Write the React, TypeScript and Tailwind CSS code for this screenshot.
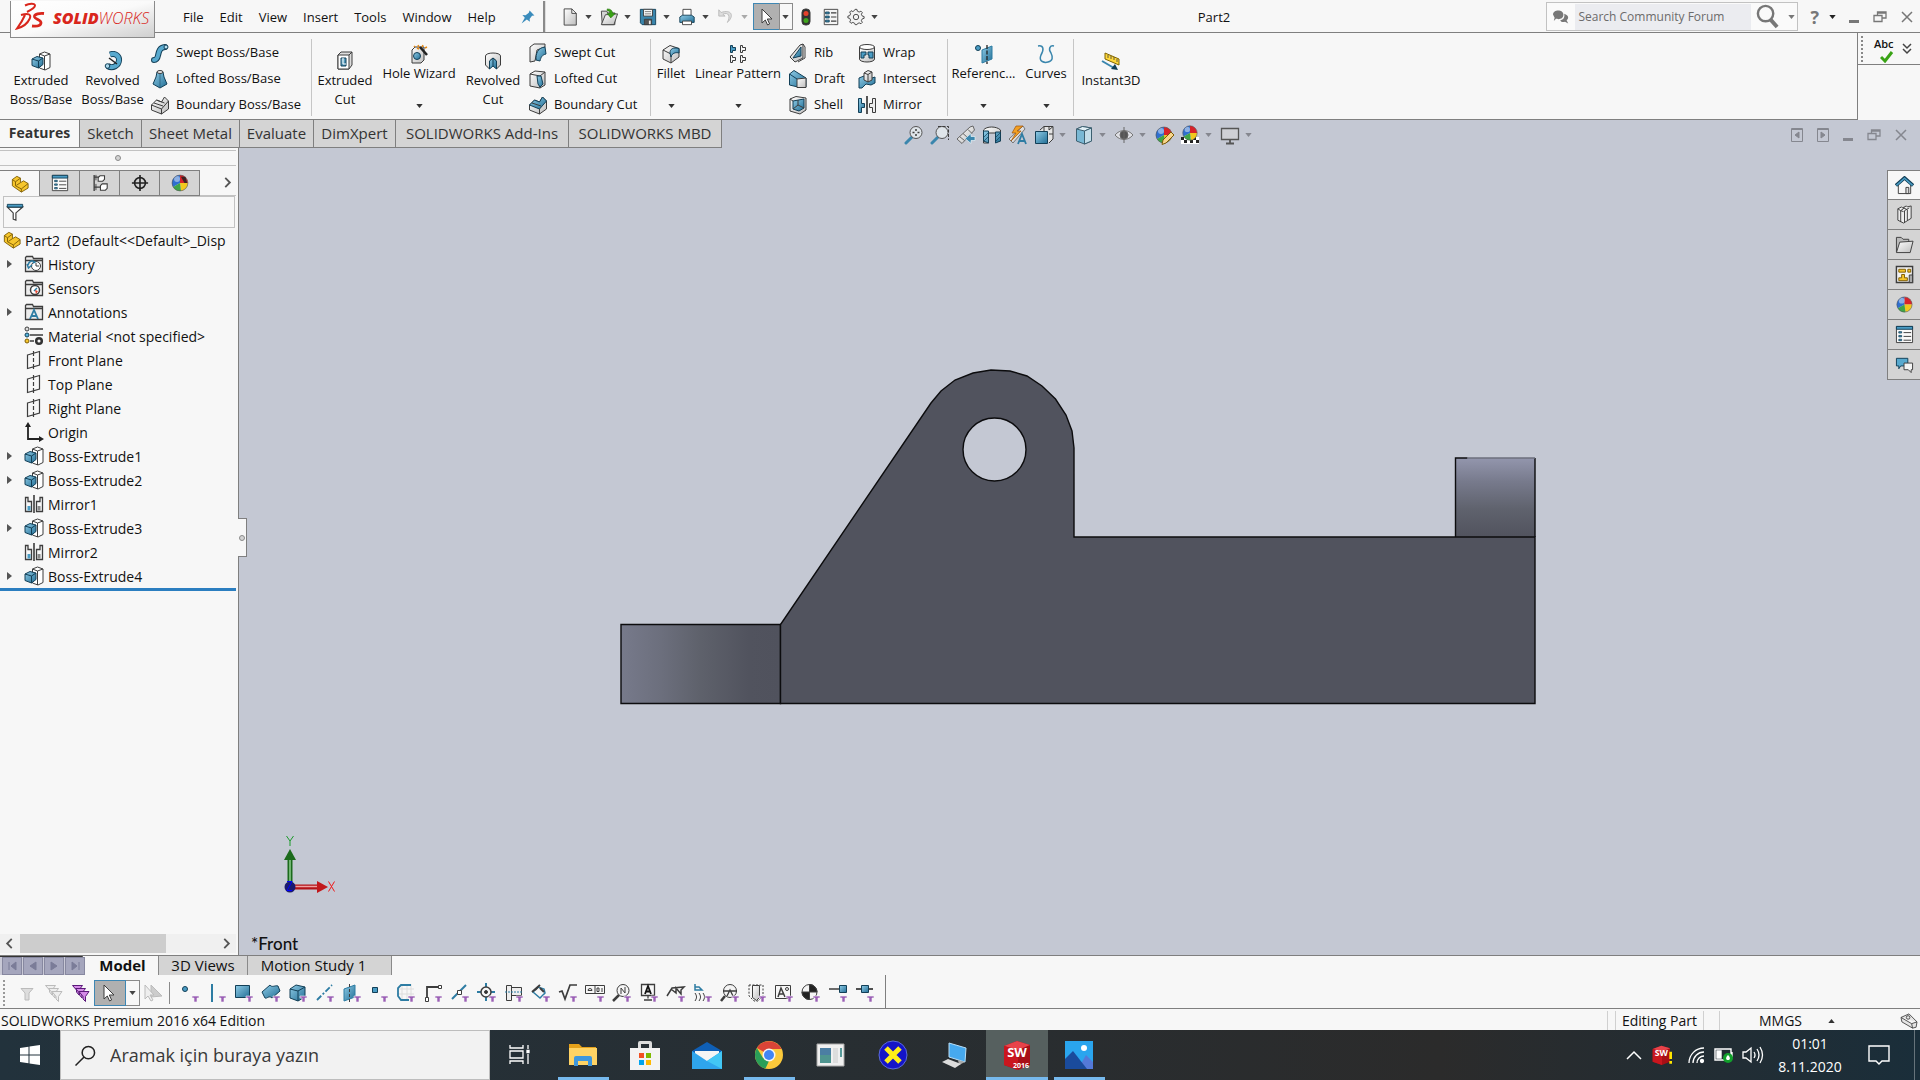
import { useState } from "react";
import type { ReactNode } from "react";

const Svg = ({ children, className = "w-5 h-5" }: { children: ReactNode; className?: string }) => (
  <svg viewBox="0 0 20 20" className={`${className} shrink-0`} fill="none" stroke="#3d3d3d" strokeWidth="1" aria-hidden="true">
    <defs>
      <linearGradient id="steel" x1="0" y1="0" x2="1" y2="1">
        <stop offset="0" stopColor="#8fcbe6" />
        <stop offset="1" stopColor="#226f96" />
      </linearGradient>
      <linearGradient id="plate" x1="0" y1="0" x2="1" y2="1">
        <stop offset="0" stopColor="#ffffff" />
        <stop offset="1" stopColor="#bdbdbd" />
      </linearGradient>
    </defs>
    {children}
  </svg>
);

const ball = (
  <g stroke="none">
    <path d="M10 10V2a8 8 0 0 0-7 12z" fill="#2f6fd0" />
    <path d="M10 10V2a8 8 0 0 1 8 8z" fill="#d8232a" />
    <path d="M10 10h8a8 8 0 0 1-7 8z" fill="#f2c81e" />
    <path d="M10 10 3 14a8 8 0 0 0 8 4z" fill="#3fa548" />
    <circle cx="7" cy="6" r="3" fill="#fff" opacity=".45" />
    <circle cx="10" cy="10" r="8" stroke="#555" strokeWidth=".6" />
  </g>
);

const lens = (
  <>
    <path d="m2 18 6-6" stroke="#3a86ad" strokeWidth="3" strokeLinecap="round" />
    <circle cx="12" cy="7.500" r="6" fill="#dfe5ea" stroke="#555" />
  </>
);

const list = (
  <>
    <path d="M2.500 1.500h15v17h-15z" fill="#f4f4f4" />
    <path d="M4 4.500h4v2H4zM4 9h4v2H4zM4 13.500h4v2H4z" fill="#4a9cc4" stroke="#123f57" />
    <path d="M10 5.500h6M10 10h6M10 14.500h6" strokeWidth="1.300" />
  </>
);

const sheet = (
  <>
    <path d="M1.500 1.500h17v17h-17z" fill="#fafafa" />
    <path d="M1.500 1.500h17v3h-17z" fill="#4a9cc4" stroke="#123f57" />
    <path d="M4 7h3v1.500H4zM4 11h3v1.500H4zM4 15h3v1.500H4z" fill="#4a9cc4" stroke="#123f57" strokeWidth=".8" />
    <path d="M9 8h8M9 12h8M9 16h8" />
  </>
);

const mirror = (
  <>
    <path d="M1.500 3.500h3v5h3v4h-3v5h-3z" fill="url(#steel)" stroke="#123f57" />
    <path d="M18.500 3.500h-3v5h-3v4h3v5h3z" fill="#eee" />
    <path d="M10 1v18" stroke="#111" strokeWidth="1.400" />
  </>
);

const boss = (
  <>
    <path d="m8.500 3 5-2 5.500 2v13.500L14 19l-5.500-2z" fill="#fff" />
    <path d="M13.500 5v14M8.500 3l5 2L19 3" />
    <path d="m1 8 5-2.500 6 1.500v6.500L7.500 17 1 14.500z" fill="url(#steel)" stroke="#123f57" />
    <path d="m1 8 6.500 2L12 7m-4.500 3v7" stroke="#123f57" />
  </>
);

const plane = <path d="m3.500 5 12-3.500V15l-12 3.500zM9.500 1v5m0 2v4m0 2v5" strokeWidth="1.200" />;

const folder = <path d="M1.500 17.500V3.500l1-1h6l1 2h9v13zM1.500 6.500h17" fill="#ececec" strokeWidth="1.300" />;

const cursor = <path d="M6 2v14l3.300-3 2.300 5 2-1-2.300-5H16z" fill="#fff" />;

const part = (
  <>
    <path d="m1.500 5 5-3.500 4 2v5l3.500-2 5 3v5l-7.500 4.500-10-7z" fill="#f6c62c" stroke="#7d5c05" />
    <path d="m1.500 5 3.500 2.500 5.500-4M5 7.500V12l6.500 3.500L19 9.500M11.500 15.500V19M10.500 8.500l-4.500 3" stroke="#7d5c05" />
  </>
);

const funnels = (fill: string, line: string) => (
  <g fill={fill} stroke={line}>
    <path d="M1.500 2.500h10L8 7v5L5.500 9V7z" />
    <path d="M4.500 5.500h10L11 10v5l-2.500-3v-2z" />
    <path d="M8 8.500h10l-3.500 5v5L12 16v-2.500z" />
  </g>
);

const icons: Record<string, ReactNode> = {
  boss,
  mirror,
  plane,
  list,
  sheet,
  part,
  ball,
  revolve: <><path d="M7 3.500c6-2 9.500 2 9 6-.5 5-6 8.500-11.500 5.500" stroke="#123f57" strokeWidth="6" /><path d="M7 3.500c6-2 9.500 2 9 6-.5 5-6 8.500-11.500 5.500" stroke="#58a9ce" strokeWidth="4.200" /><circle cx="4.500" cy="15" r="2.300" fill="#a9d8ec" stroke="#123f57" /><path d="m6 7 8 6" strokeWidth="1.500" stroke="#222" /></>,
  sweep: <><path d="M4 17c7 0 1-12 11-13" stroke="#123f57" strokeWidth="6" strokeLinecap="round" /><path d="M4 17c7 0 1-12 11-13" stroke="#58a9ce" strokeWidth="4" strokeLinecap="round" /><circle cx="16" cy="4" r="2" fill="#b7e0f1" stroke="#123f57" /></>,
  loft: <><path d="M7 3h6l1 5 3 7-7 4-7-4 3-7z" fill="url(#steel)" stroke="#123f57" /><ellipse cx="10" cy="3" rx="3" ry="1.500" fill="#e9e9e9" /><path d="M10 5v13" stroke="#123f57" opacity=".5" /></>,
  boundary: <><path d="m1.500 10 5-5 5 2 3-5 4 4v8l-7 5-10-4z" fill="url(#plate)" /><path d="m1.500 10 10 4 7-8M11.500 14v5M4 8l9 3M6.500 5l8 3" /></>,
  boundaryCut: <><path d="m1.500 10 5-5 5 2 3-5 4 4v8l-7 5-10-4z" fill="url(#plate)" /><path d="m1.500 10 5-5 5 2 3-5 4 4-7 8z" fill="url(#steel)" stroke="#123f57" /><path d="M11.500 14v5M4 8l9 3" /></>,
  cut: <><path d="m3 4 3-3h11v13l-3 4H3z" fill="#ddd" /><path d="M3 4h11v14H3z" fill="#fff" /><path d="m14 4 3-3" /><path d="M6 7h5v8H6z" fill="url(#steel)" stroke="#123f57" /><path d="M8 7v6h3" stroke="#fff" /></>,
  hole: <><path d="m3 6 3-3h9v13l-3 3H3z" fill="url(#plate)" /><circle cx="8" cy="12" r="3.500" fill="url(#steel)" stroke="#123f57" /><path d="m11 3 7 8" stroke="#222" strokeWidth="2.500" /><path d="m5 2 1 1M9 1l1 2m4-2-1 2m5 0-2 1M8 4l2 1" stroke="#e88a12" strokeWidth="1.500" /></>,
  revCut: <><path d="M2.500 5c0-4 15-4 15 0v9l-4 4v-8l-3.500-3L6.500 10v8l-4-4z" fill="url(#plate)" /><path d="M6.500 10 10 7l3.500 3v8L10 15l-3.500 3z" fill="url(#steel)" stroke="#123f57" /><path d="M10 7v8" stroke="#123f57" /></>,
  sweepCut: <><path d="m2 4 4-3h11v3l-8 3-2 11-5 1z" fill="url(#plate)" /><path d="M17 4C9 5 8 11 8 17l4 1c1-4 2-6 6-7z" fill="url(#steel)" stroke="#123f57" /></>,
  loftCut: <><path d="m2 5 5-3 10 1v13l-5 3-10-2z" fill="url(#plate)" /><path d="m2 5 10 2 5-4m-5 4v12" /><path d="M9 7h4l2 8-3 3-2-3z" fill="url(#steel)" stroke="#123f57" /></>,
  fillet: <><path d="m2 6 7-4.500 9 3V13l-8 6-8-4z" fill="url(#plate)" /><path d="m2 6 8 4v9" /><path d="M9 9c0-4 3-6 9-4.500V9c-3-1-7 0-8 4z" fill="url(#steel)" stroke="#123f57" /></>,
  linear: <><path d="M2.500 1.500h2v2h3v3h-3v2h-2z" fill="#4a9cc4" stroke="#123f57" /><path d="M12.500 1.500h2v2h3v3h-3v2h-2zM2.500 11.500h2v2h3v3h-3v2h-2zM12.500 11.500h2v2h3v3h-3v2h-2z" /></>,
  rib: <><path d="m2 14 10-12 3-1v14l-8 4z" fill="url(#plate)" /><path d="m5 15 8-11v9z" fill="url(#steel)" stroke="#123f57" /><path d="m15 1 2 3v11l-7 4" /></>,
  draft: <><path d="M1.500 5 6 1.500 18 9v9l-6 .5L1.500 16z" fill="url(#steel)" stroke="#123f57" /><path d="m9 10 9-1v9.500H9z" fill="url(#plate)" /><path d="m1.500 5 7.500 5" stroke="#123f57" /></>,
  shell: <><path d="m2 4 6-2.500L18 3v12l-6 4-10-3z" fill="url(#plate)" /><path d="m5 6 11-2v9l-5 3-6-2z" fill="url(#steel)" stroke="#123f57" /><path d="m5 14 5-4 6 3m-6-3V5M2 4l3 2" /></>,
  wrap: <><path d="M2.500 4v12c0 4 15 4 15 0V4" fill="url(#plate)" /><ellipse cx="10" cy="4" rx="7.500" ry="2.500" fill="#fff" /><path d="M4 9h5v3H7v3H4zM11 9h5v6h-4v-3h-1z" fill="#4a9cc4" stroke="#123f57" /></>,
  intersect: <><path d="m2 9 5-2 8 2 3-1v6l-4 2-5-1-4 4H2z" fill="url(#steel)" stroke="#123f57" /><path d="m7 4 4-2.500 4 1.500v8l-4 2-4-2z" fill="url(#plate)" /><path d="m7 4 4 1.500 4-2.500M11 5.500V13" /></>,
  refgeo: <><circle cx="4" cy="4" r="2.500" fill="#4a9cc4" stroke="#123f57" /><path d="m8 6 10-4v13L8 19z" fill="url(#steel)" stroke="#2d7ca3" /><path d="M13 1v19" stroke="#222" strokeWidth="1.300" strokeDasharray="4 1.500" /></>,
  curves: <path d="M2 2c6-1 6 4 3 9-3 7 4 8 7 7 5-1 5-5 3-9-3-4-1-8 3-7" stroke="#3a86ad" strokeWidth="1.500" />,
  instant: <><path d="m4 2 14 6v6L4 8z" fill="#ffd83a" stroke="#806500" /><path d="M7 4v3m3-2v3m3-2v3m3-1v3" strokeWidth=".8" /><path d="m1 10 12 7" stroke="#3a86ad" strokeWidth="2" /><path d="m17 19-7-1 4-5z" fill="#123f57" stroke="none" /></>,
  pin: <path d="m12 2 6 6-3 .5-3 4 .5 3.500-4-3L2 18l4-7-3-3.500 4 .2 4-3z" fill="#3a8cbc" stroke="none" />,
  fresh: <path d="M3.500 1h8.500l5 5v13H3.500zM12 1v5h5" fill="url(#plate)" />,
  open: <><path d="M1.500 3.500h6l1 2h8v13h-14z" fill="#d5d5d5" /><path d="m6 7.500 13.500-1-4 12h-14z" fill="url(#plate)" /><path d="M8 1c4 0 6 2 6 5h3l-5 5-4-5h3c0-2-1-3-3-3z" fill="#39a315" stroke="#1e6c06" strokeWidth=".6" /></>,
  save: <><path d="M1.500 1.500h17v17h-15l-2-2z" fill="#3a86ad" stroke="#123f57" /><path d="M5 1.500h10V9H5z" fill="#f7f7f7" /><path d="M6.500 4h7m-7 2.500h7" stroke="#777" /><path d="M6 12.500h8v6H6z" fill="#555" /><path d="M11 14h2v4h-2z" fill="#eee" stroke="none" /></>,
  print: <><path d="M5.500 1.500h9v8h-9z" fill="#fff" /><path d="m2 10 3-2h10l3 2v6H2z" fill="url(#steel)" stroke="#123f57" /><path d="M5 14.500h10v4H5z" fill="#fff" /></>,
  undo: <path d="M2 2v7h7L6.500 7c6-3 9 2 5 9 8-7 5-15-7-11z" fill="#ddd" stroke="#b9b9b9" />,
  cursor,
  light: <><rect x="5.500" y="1" width="9" height="18" rx="4" fill="#333" /><circle cx="10" cy="6" r="2.800" fill="#e5412c" stroke="none" /><circle cx="10" cy="14" r="2.800" fill="#3fa51d" stroke="none" /></>,
  gear: <><path d="m8.500 2.500.5-1h2l.5 2 2 1 2-1 1.500 1.500-1 2 1 2 2 .5v2l-2 .5-1 2 1 2-1.500 1.500-2-1-2 1-.5 1H9l-.5-1.500-2-1-2 1L3 15.500l1-2-1-2-2-.5V9l2-.5 1-2-1-2L4.500 3l2 1z" fill="#f2f2f2" /><circle cx="10" cy="10" r="3" /></>,
  zoomFit: <>{lens}<path d="M12 4v2m0 3v2M8.500 7.500h2m3 0h2" strokeWidth="1.500" /></>,
  zoomArea: <>{lens}<path d="M8 1.500h10.500V15" strokeDasharray="3 1.500" /></>,
  prev: <><path d="m1 14 5 4.500L18.500 5l-1.500-4-3 1z" fill="url(#plate)" stroke="#666" /><path d="m3.500 11.500 5 4m3.500-11 4 4M7 8.500l4.500 4" stroke="#666" /><path d="M19 11.500v4h-4v3l-6-5 6-5v3z" fill="#3a86ad" stroke="#e8f3f8" strokeWidth=".7" /></>,
  section: <><path d="M1.500 5c3-4 13-4 17 0v11h-5V8h-7v10h-5z" fill="url(#plate)" /><path d="M1.500 6h5v12l-5-2zM13.500 7h5v9l-5 2z" fill="url(#steel)" stroke="#123f57" /><path d="m2 12 4-4m-4 8 4-4m8 0 4-4m-4 8 4-4" stroke="#123f57" strokeWidth=".7" /></>,
  annoView: <><path d="m1 14 4 4L17 4l-2-3z" fill="url(#plate)" stroke="#777" /><path d="m8 1-4 7h4l-5 8 10-10H9l6-5z" fill="#f2a024" stroke="#a0540b" strokeWidth=".7" /><path d="m10 19 4-10 4 10m-7-3h6" stroke="#2d7ca3" strokeWidth="1.800" /></>,
  orient: <><path d="m6 5 4-3.500h9V14l-4 4" fill="#e4e4e4" /><path d="M10 1.500V10m5-8.500V5m4 4h-4m0-4 4-3.500" /><path d="M1.500 6.500h12v12h-12z" fill="url(#steel)" stroke="#123f57" /></>,
  style: <><path d="m2.500 4 6-2.500 9 1.500v13l-7 3-8-3z" fill="#79b8d4" stroke="#3c5f70" /><path d="m2.500 4 8 2 7-3-9-1.500z" fill="#e0eff6" stroke="#3c5f70" /><path d="M10.500 6v13l7-3V3z" fill="#c4dde8" stroke="#3c5f70" /></>,
  eye: <><path d="M1 10c5-6 13-6 18 0-5 6-13 6-18 0z" fill="#dfe0e5" stroke="#777" /><circle cx="10" cy="10" r="4" fill="#555" stroke="#666" /><path d="M10 2v16" stroke="#666" /></>,
  paint: <>{ball}<path d="m9 15 8-8 3 3-8 8-4 1.500z" fill="#f7d58d" stroke="#7d5c05" /></>,
  scene: <><path d="M1 12h18v7H1z" fill="#fff" stroke="none" /><path d="M1 12h3v3H1zM7 12h3v3H7zM13 12h3v3h-3zM4 15h3v3H4zM10 15h3v3h-3zM16 15h3v3h-3z" fill="#222" stroke="none" /><g transform="translate(1 -1) scale(.9)">{ball}</g></>,
  monitor: <><path d="M1.500 3.500h17v11h-17z" fill="#cfd0d5" strokeWidth="1.300" stroke="#555" /><path d="M10 15v3M6 18.500h8" strokeWidth="1.800" stroke="#555" /></>,
  config: <><path d="M3.500 1v18M3.500 3.500h6m-6 11h8" strokeWidth="1.500" /><path d="m8 4 2-2h5v4l-2 2H8zM10.500 13l2-2h5.500v5l-2 2h-5.500z" fill="#fff" strokeWidth="1.200" /><path d="M5.500 1v6m0 4v7" /></>,
  target: <><circle cx="10" cy="10" r="6" strokeWidth="1.800" stroke="#222" /><path d="M10 1v18M1 10h18" strokeWidth="1.800" stroke="#222" /></>,
  display: <><g transform="translate(-1 -1) scale(1.100)">{ball}</g><path d="m11 3 5 0 2 7-3 0z" fill="#222" stroke="none" opacity=".85" /></>,
  filter: <><path d="M1.500 4.500 8 11v7l3 1v-8l7.500-6.500z" fill="#fff" strokeWidth="1.300" /><path d="M1.500 1.500h17v3h-17z" fill="#4a9cc4" stroke="#123f57" /></>,
  history: <>{folder}<circle cx="12" cy="12" r="4.500" fill="#fff" /><path d="M12 9v3h3" /><path d="M4 11c1-4 4-5 7-3l-2 1M3 10l1.500 4L8 11" stroke="#2d7ca3" strokeWidth="1.500" /></>,
  sensors: <>{folder}<circle cx="11" cy="12" r="4.500" fill="#fff" strokeWidth="1.500" /><path d="m10 13 3-3" stroke="#2d7ca3" strokeWidth="1.500" /><path d="m11 12 3 1-2 3z" fill="#e5412c" stroke="none" /></>,
  annotations: <>{folder}<path d="m6 17 4-9 4 9m-6-3h5" stroke="#2d7ca3" strokeWidth="1.800" /></>,
  material: <><path d="M6 3h13M6 9h13M6 15h4" strokeWidth="1.700" /><circle cx="3" cy="3" r="2" fill="#ddd" /><circle cx="3" cy="9" r="2" fill="#58b4dc" stroke="#123f57" /><circle cx="3" cy="15" r="2" fill="#f6c62c" stroke="#7d5c05" /><circle cx="15" cy="15" r="2.800" stroke="#333" strokeWidth="2.500" /></>,
  origin: <><path d="M4 4v13h12" strokeWidth="1.800" stroke="#222" /><path d="m4 0 3 5H1zM20 17l-5-3v6z" fill="#222" stroke="none" /></>,
  treeMirror: <><path d="M1.500 3.500h2.500v4h3.500v10h-6zM18.500 3.500h-2.500v4h-3.500v10h6z" strokeWidth="1.300" fill="#f7f7f7" /><path d="M3.500 12h3v4.500h-3z" fill="#4a9cc4" stroke="none" /><path d="M13.500 12h3v4.500h-3z" fill="#888" stroke="none" /><path d="M10 1v18" stroke="#111" strokeWidth="1.300" /></>,
  home: <><path d="M3.500 9v9.500h13V9L10 3z" fill="#f7f7f7" /><path d="M11.500 12h3v6.500h-3z" fill="#ddd" /><path d="m1 10 9-8 9 8" stroke="#123f57" strokeWidth="3.600" /><path d="m1.500 9.800 8.500-7.500 8.500 7.500" stroke="#4a9cc4" strokeWidth="1.600" /></>,
  library: <path d="m3 4 4-2 1 1 4-2 1 1 4-1v13l-8 5-6-3zm0 0 3 2v12M6 6l4-3m0 16V6l5-3M6 6l3 1m0-4 4 2v11" fill="#eee" />,
  openFolder: <><path d="M1.500 18V2.500h5l2 2h6V8" fill="#bbb" /><path d="m5 7.500 14-1-3 12H1.500z" fill="url(#plate)" /></>,
  palette: <><path d="M1.500 1.500h17v17h-17z" fill="#f2f2f2" strokeWidth="1.500" /><path d="M4 4.500h7v3H4zM13.500 4.500h3v3h-3zM7 10h3v3.500h3v3H4v-3h3z" fill="#f6c62c" stroke="#7d5c05" /><path d="M15 10.500h3.500v8H15z" fill="#aaa" /></>,
  chat: <><path d="M1.500 3.500h12v8H6l-2 3v-3H1.500z" fill="#58a9ce" stroke="#123f57" /><path d="M9.500 8.500h9v7H17v3l-3-3H9.500z" fill="#f4f4f4" /></>,
};

const Icon = ({ name, className }: { name: string; className?: string }) => <Svg className={className}>{icons[name]}</Svg>;

const Arrow = ({ className = "fill-[#444]" }: { className?: string }) => (
  <svg viewBox="0 0 8 5" className={`w-[7px] h-[4px] shrink-0 ${className}`} aria-hidden="true"><path d="M0 0h8L4 5z" /></svg>
);

const menus = ["File", "Edit", "View", "Insert", "Tools", "Window", "Help"];

const Logo = () => (
  <div className="relative z-10 ml-2.5 flex h-[37px] w-[145px] shrink-0 items-center self-start border border-t-0 border-[#8a8a8a] bg-linear-to-br from-white via-[#fafafa] to-[#cfcfcf] pb-1 pl-1 text-[#d9261c]">
    <svg viewBox="0 0 30 30" className="h-[30px] w-[30px] shrink-0" fill="none" stroke="#d9261c" strokeWidth="2" aria-hidden="true">
      <path d="M10 3.500c4-2 10-2.500 10 0s-4 4.500-8 6.500" />
      <path d="M6 13c7-2 11-1 8.500 4-2 4.500-7 8-12.500 9.500 3-4 6-9 8-13.500" />
      <path d="M29 11.500c-4-.5-10 .5-9.500 3.500.5 2 7 3 6.500 6-.5 3-5 3.500-9 3" strokeWidth="2.800" />
    </svg>
    <span className="mt-[2px] ml-2 text-base leading-5 font-extrabold italic">SOLID<span className="font-light">WORKS</span></span>
  </div>
);

const QuickTool = ({ name, label, arrow = true, dim = false }: { name: string; label: string; arrow?: boolean; dim?: boolean }) => (
  <div className="flex items-center">
    <button aria-label={label} className="flex w-6 justify-center"><Icon name={name} className="h-[18px] w-[18px]" /></button>
    {arrow && <button aria-label={`${label} options`} className="flex h-5 w-[14px] items-center justify-center"><Arrow className={dim ? "fill-[#aaa]" : "fill-[#444]"} /></button>}
  </div>
);

const RestoreIcon = () => (
  <svg viewBox="0 0 14 12" className="h-3 w-[14px]" fill="none" stroke="currentColor" strokeWidth="1.300" aria-hidden="true">
    <path d="M1 4.500h8v6H1zM4.500 4V1H13v6H9M4.500 2H13" />
  </svg>
);

const CloseIcon = () => (
  <svg viewBox="0 0 12 12" className="h-3 w-3" fill="none" stroke="currentColor" strokeWidth="1.500" aria-hidden="true"><path d="m1 1 10 10M11 1 1 11" /></svg>
);

const TitleBar = () => (
  <header className="flex h-[33px] items-center border-b border-[#7f7f7f] bg-[#f7f7f7] pt-px text-[13px]">
    <Logo />
    <nav className="ml-7 flex gap-4">
      {menus.map((m) => <button key={m} className="leading-5">{m}</button>)}
    </nav>
    <button aria-label="Pin menu" className="ml-6"><Icon name="pin" className="h-4 w-4" /></button>
    <div className="ml-[7px] h-full w-[3px] border-l-2 border-[#8a8a8a] bg-[#ddd]" />
    <div className="ml-3 flex items-center gap-px">
      <QuickTool name="fresh" label="New" />
      <QuickTool name="open" label="Open" />
      <QuickTool name="save" label="Save" />
      <QuickTool name="print" label="Print" />
      <QuickTool name="undo" label="Undo" dim />
      <button aria-label="Select" className="flex h-[27px] w-[27px] items-center justify-center border border-[#3f87b3] bg-[#b0b0b0]"><Icon name="cursor" /></button>
      <button aria-label="Select options" className="-ml-[2px] flex h-[27px] w-[14px] items-center justify-center border border-[#8a8a8a]"><Arrow /></button>
      <QuickTool name="light" label="Rebuild" arrow={false} />
      <QuickTool name="list" label="File properties" arrow={false} />
      <QuickTool name="gear" label="Options" />
    </div>
    <h1 className="flex-1 text-center leading-5">Part2</h1>
    <label className="flex h-[29px] w-[252px] items-center border border-[#c2c2c2] bg-[#fafafa]">
      <svg viewBox="0 0 20 20" className="mx-[6px] h-4 w-4 shrink-0" fill="#777" aria-hidden="true">
        <path d="M0 7c0-7 13-7 13 0s-8 6-9 5l-3 3 1-4z" /><path d="M14 6c6 2 6 6 3 8l2 4-4-2c-3 1-5 0-6-2 4 0 6-4 5-8z" />
      </svg>
      <input aria-label="Search Community Forum" placeholder="Search Community Forum" className="h-[26px] w-[176px] bg-[#ebecf0] pl-[3px] text-[12px] leading-5 placeholder:text-[#6b6b6b]" />
      <svg viewBox="0 0 26 26" className="ml-[4px] h-[25px] w-[25px] shrink-0" fill="none" stroke="#777" aria-hidden="true">
        <circle cx="11" cy="10" r="8" strokeWidth="2.500" /><path d="m16 16 7 8" strokeWidth="4" />
      </svg>
      <Arrow className="ml-2 fill-[#777]" />
    </label>
    <button aria-label="Help" className="ml-3 text-lg leading-5 font-bold text-[#777]">?</button>
    <button aria-label="Help options" className="ml-2.5"><Arrow className="fill-[#222]" /></button>
    <div className="mr-[7px] ml-[13px] flex items-center gap-[14px] text-[#777]">
      <button aria-label="Minimize" className="flex h-3 w-[10px] items-end"><span className="h-[3px] w-full bg-[#777]" /></button>
      <button aria-label="Restore"><RestoreIcon /></button>
      <button aria-label="Close"><CloseIcon /></button>
    </div>
  </header>
);

const Big = ({ icon, label, className, arrow = false }: { icon: string; label: string; className: string; arrow?: boolean }) => (
  <button className={`flex shrink-0 flex-col items-center ${arrow ? "pt-[11px]" : "pt-[18px]"} ${className}`}>
    <Icon name={icon} />
    <span className="whitespace-pre text-center leading-[19px]">{label}</span>
    {arrow && <Arrow className="mt-[21px] fill-[#333]" />}
  </button>
);

const Column = ({ items, className }: { items: [string, string][]; className: string }) => (
  <div className={`flex shrink-0 flex-col pt-[7px] ${className}`}>
    {items.map(([icon, label]) => (
      <button key={label} className="flex h-[26px] items-center gap-1.5 whitespace-nowrap"><Icon name={icon} />{label}</button>
    ))}
  </div>
);

const Rule = () => <div className="mt-[6px] h-[77px] w-px shrink-0 bg-[#c6c6c6]" />;

const Ribbon = () => (
  <div className="flex h-[87px] bg-[#f7f7f7] text-[13px]">
    <div className="flex flex-1 items-start border-r border-b border-[#7f7f7f]">
      <Big icon="boss" label={"Extruded\nBoss/Base"} className="ml-1.5 w-[70px]" />
      <Big icon="revolve" label={"Revolved\nBoss/Base"} className="w-[73px]" />
      <Column items={[["sweep", "Swept Boss/Base"], ["loft", "Lofted Boss/Base"], ["boundary", "Boundary Boss/Base"]]} className="w-[162px] pl-px" />
      <Rule />
      <Big icon="cut" label={"Extruded\nCut"} className="w-[66px]" />
      <Big icon="hole" label="Hole Wizard" className="w-[82px]" arrow />
      <Big icon="revCut" label={"Revolved\nCut"} className="w-[66px]" />
      <Column items={[["sweepCut", "Swept Cut"], ["loftCut", "Lofted Cut"], ["boundaryCut", "Boundary Cut"]]} className="w-[124px] pl-[2px]" />
      <Rule />
      <Big icon="fillet" label="Fillet" className="w-[40px]" arrow />
      <Big icon="linear" label="Linear Pattern" className="w-[94px]" arrow />
      <Column items={[["rib", "Rib"], ["draft", "Draft"], ["shell", "Shell"]]} className="w-[69px] pl-[3px]" />
      <Column items={[["wrap", "Wrap"], ["intersect", "Intersect"], ["mirror", "Mirror"]]} className="w-[93px] pl-[3px]" />
      <Rule />
      <Big icon="refgeo" label="Referenc..." className="w-[71px]" arrow />
      <Big icon="curves" label="Curves" className="w-[54px]" arrow />
      <Rule />
      <Big icon="instant" label="Instant3D" className="w-[74px]" />
    </div>
    <div className="flex h-8 w-[62px] items-center border-b border-[#7f7f7f] pl-[3px]">
      <div className="h-[26px] border-l-2 border-dotted border-[#888]" />
      <button aria-label="Spell check" className="relative ml-[11px] flex h-7 w-[20px] items-start text-[11px] leading-[18px] font-semibold">
        Abc
        <svg viewBox="0 0 14 12" className="absolute right-0 bottom-0 h-3 w-[14px]" fill="none" stroke="#39a315" strokeWidth="3" aria-hidden="true"><path d="m1 6 4 4 7-9" /></svg>
      </button>
      <svg viewBox="0 0 10 12" className="ml-2 h-3 w-2.5" fill="none" stroke="#444" strokeWidth="1.500" aria-hidden="true"><path d="m1 1 4 4 4-4M1 6l4 4 4-4" /></svg>
    </div>
  </div>
);

const tabs: [string, string][] = [
  ["Features", "w-[80px]"],
  ["Sketch", "w-[62px]"],
  ["Sheet Metal", "w-[98px]"],
  ["Evaluate", "w-[74px]"],
  ["DimXpert", "w-[82px]"],
  ["SOLIDWORKS Add-Ins", "w-[173px]"],
  ["SOLIDWORKS MBD", "w-[153px]"],
];

const headTools: [string, boolean][] = [
  ["zoomFit", false], ["zoomArea", false], ["prev", false], ["section", false], ["annoView", false], ["orient", true],
  ["style", true], ["eye", true], ["paint", false], ["scene", true], ["monitor", true],
];

const TabRow = () => {
  const [active, setActive] = useState("Features");
  return (
    <div className="flex h-7 bg-[#c4c8d3]">
      {tabs.map(([label, width]) => (
        <button
          key={label}
          onClick={() => setActive(label)}
          className={`${width} shrink-0 border-r border-b border-[#7f7f7f] pb-px whitespace-nowrap leading-5 ${active === label ? "bg-[#f7f7f7] text-[14px] font-bold" : "bg-[#d4d4d4] text-[15px]"} text-[#333]`}
        >
          {label}
        </button>
      ))}
      <div className="ml-[182px] flex items-center pt-[2px]">
        {headTools.map(([name, arrow]) => (
          <div key={name} className={`flex items-center ${arrow ? "mr-1" : "mr-1.5"}`}>
            <button aria-label={name}><Icon name={name} /></button>
            {arrow && <button aria-label={`${name} options`} className="flex h-5 w-4 items-center justify-center"><Arrow className="fill-[#85878f]" /></button>}
          </div>
        ))}
      </div>
      <div className="mr-[13px] ml-auto flex items-center gap-[14px] pt-[2px] text-[#85878f]">
        {["M8 4v6L4 7z", "M4 4v6l4-3z"].map((d) => (
          <button key={d} aria-label="Pane">
            <svg viewBox="0 0 12 14" className="h-[14px] w-3" fill="none" stroke="currentColor" aria-hidden="true">
              <path d="M.5.500h11v13H.5zM.5 1.500h11" /><path d={d} fill="currentColor" />
            </svg>
          </button>
        ))}
        <button aria-label="Minimize document" className="flex h-3 w-[10px] items-end"><span className="h-[3px] w-full bg-[#85878f]" /></button>
        <button aria-label="Restore document"><RestoreIcon /></button>
        <button aria-label="Close document"><CloseIcon /></button>
      </div>
    </div>
  );
};

const tree: [string, string, boolean][] = [
  ["history", "History", true],
  ["sensors", "Sensors", false],
  ["annotations", "Annotations", true],
  ["material", "Material <not specified>", false],
  ["plane", "Front Plane", false],
  ["plane", "Top Plane", false],
  ["plane", "Right Plane", false],
  ["origin", "Origin", false],
  ["boss", "Boss-Extrude1", true],
  ["boss", "Boss-Extrude2", true],
  ["treeMirror", "Mirror1", false],
  ["boss", "Boss-Extrude3", true],
  ["treeMirror", "Mirror2", false],
  ["boss", "Boss-Extrude4", true],
];

const Chevron = ({ d }: { d: string }) => (
  <svg viewBox="0 0 8 12" className="h-[11px] w-2" fill="none" stroke="#555" strokeWidth="2" aria-hidden="true"><path d={d} /></svg>
);

const FeaturePanel = () => (
  <aside className="flex w-[239px] shrink-0 flex-col border-r border-[#7f7f7f] bg-[#f7f7f7]">
    <div className="mt-[2px] mr-[2px] flex h-4 items-center justify-center border-y border-[#c2c2c2]">
      <span className="h-[6px] w-[6px] rounded-full border border-[#8a8a8a] bg-[#d4d4d4]" />
    </div>
    <div className="mt-1 mr-[2px] flex h-[26px]">
      {["part", "sheet", "config", "target", "display"].map((name, i) => (
        <button key={name} aria-label={name} className={`flex w-10 items-center justify-center border-t border-r border-[#7f7f7f] ${i === 0 ? "" : "border-b bg-[#d4d4d4]"}`}>
          <Icon name={name} className="h-[18px] w-[18px]" />
        </button>
      ))}
      <button aria-label="More tabs" className="flex flex-1 items-center justify-end border-b border-[#c2c2c2] pr-1"><Chevron d="m1 1 5 5-5 5" /></button>
    </div>
    <label className="mr-[3px] ml-[3px] flex h-8 items-center border border-[#c2c2c2] pl-[2px]">
      <Icon name="filter" className="h-[18px] w-[18px]" />
      <input aria-label="Filter tree" className="ml-1 h-6 w-0 flex-1 bg-transparent outline-none" />
    </label>
    <div className="mr-[2px] flex h-6 items-center gap-1 overflow-hidden pl-[3px] whitespace-pre">
      <Icon name="part" className="h-[18px] w-[18px]" />{"Part2  (Default<<Default>_Disp"}
    </div>
    <ul className="mr-[2px] border-b-[3px] border-[#2b7ec0]">
      {tree.map(([icon, label, open]) => (
        <li key={label} className="flex h-6 items-center pl-[7px]">
          <span className="w-[17px]">
            {open && <svg viewBox="0 0 5 8" className="h-2 w-[5px]" fill="#555" aria-hidden="true"><path d="M0 0v8l5-4z" /></svg>}
          </span>
          <Icon name={icon} className="mr-1 h-5 w-5" />
          <span className="whitespace-nowrap">{label}</span>
        </li>
      ))}
    </ul>
    <div className="mt-auto mr-[2px] mb-[2px] flex h-[19px] items-center justify-between bg-[#f0f0f0] px-[5px]">
      <button aria-label="Scroll left"><Chevron d="M7 1 2 6l5 5" /></button>
      <div className="mr-auto ml-[7px] h-full w-[146px] bg-[#cdcdcd]" />
      <button aria-label="Scroll right"><Chevron d="m1 1 5 5-5 5" /></button>
    </div>
  </aside>
);

const Model = () => (
  <svg viewBox="239 148 1681 807" className="block w-full" role="img" aria-label="Front view of the part">
    <defs>
      <linearGradient id="cylLeft">
        <stop offset="0" stopColor="#777a8b" />
        <stop offset=".25" stopColor="#6c6f7d" />
        <stop offset=".5" stopColor="#5e616b" />
        <stop offset=".8" stopColor="#51535e" />
        <stop offset="1" stopColor="#50525d" />
      </linearGradient>
      <linearGradient id="cylRight" x1="0" y1="0" x2="0" y2="1">
        <stop offset="0" stopColor="#9396ad" />
        <stop offset=".3" stopColor="#777a8c" />
        <stop offset=".65" stopColor="#5f626d" />
        <stop offset="1" stopColor="#51535e" />
      </linearGradient>
    </defs>
    <g stroke="#0c0c0e" strokeWidth="1.400">
      <path d="M621 624.500h159.500v79H621z" fill="url(#cylLeft)" />
      <path d="M1455.500 458h79.500v79h-79.500z" fill="url(#cylRight)" stroke="none" />
      <path d="M1455.500 537v-79h12M1535 458v79" fill="none" />
      <path d="M1467 458h68" stroke="#6d6f7c" fill="none" />
      <path
        fillRule="evenodd"
        fill="#51535e"
        d="M780.500 703.500v-79L931 403l10-12 14-11 18-7 18-3 19 1 17 5 15 10 13.500 13 10.500 16 6 16 2 17v89H1535v166.500zM963 449.500a31.500 31.500 0 1 0 63 0 31.500 31.500 0 1 0-63 0z"
      />
    </g>
  </svg>
);

const Triad = () => (
  <svg viewBox="276 832 64 70" className="absolute bottom-[53px] left-[37px] h-[70px] w-16" fill="none" aria-hidden="true">
    <path d="M290 884v-24" stroke="#1c6b1c" strokeWidth="5" />
    <path d="M290 884v-24" stroke="#8fce8f" strokeWidth="1.500" />
    <path d="m290 849 6 11h-12z" fill="#1c6b1c" />
    <path d="M293 887h24" stroke="#b31217" strokeWidth="5" />
    <path d="M293 886.500h24" stroke="#f0a0a0" strokeWidth="1.500" />
    <path d="m328 887-11 6v-12z" fill="#c2181c" />
    <circle cx="290" cy="887" r="5.500" fill="#1a1a70" />
    <path d="M287 881.500h5l-5 9h5" stroke="#0000ff" />
    <path d="m286.500 836 3.500 5 3.500-5M290 841v5" stroke="#1b9a2a" />
    <path d="m328.500 881.500 6 10m0-10-6 10" stroke="#f01818" />
  </svg>
);

const Viewport = () => (
  <main className="relative min-w-0 flex-1 bg-[#c4c8d3]">
    <Model />
    <button aria-label="Collapse panel" className="absolute top-[370px] -left-px flex h-[39px] w-[9px] items-center justify-center border border-l-0 border-[#7f7f7f] bg-[#f7f7f7]">
      <span className="h-[6px] w-[6px] rounded-full border border-[#8a8a8a] bg-[#d4d4d4]" />
    </button>
    <Triad />
    <span className="absolute bottom-0 left-3 font-[Lato,sans-serif] text-[17px] leading-[22px] font-medium">*Front</span>
    <div className="absolute top-[22px] right-0 flex w-[33px] flex-col border-l border-[#7f7f7f]">
      {["home", "library", "openFolder", "palette", "ball", "sheet", "chat"].map((name, i) => (
        <button key={name} aria-label={name} className={`flex h-[30px] items-center justify-center border-[#7f7f7f] ${i === 0 ? "border-y bg-[#f7f7f7]" : "border-b bg-[#d4d4d4]"}`}>
          <Icon name={name} className="h-[19px] w-[19px]" />
        </button>
      ))}
    </div>
  </main>
);

const SheetTabs = () => (
  <div className="flex h-5 border-t border-[#7f7f7f] bg-[#f7f7f7] text-[15px]">
    <div className="flex w-[83px] gap-px border-t border-r border-[#333] border-r-[#8a8a8a] bg-[#c9c9d6] pl-[2px]">
      {["M6 4v8M13 4v8L8 8z", "M12 4v8L6 8z", "M6 4v8l6-4z", "M13 4v8M6 4v8l5-4z"].map((d) => (
        <button key={d} aria-label="Step tabs" className="flex flex-1 items-center justify-center border border-[#8788a0] bg-[#a5a6bd]">
          <svg viewBox="0 0 18 16" className="h-4 w-[18px]" fill="#7b7c98" stroke="#7b7c98" aria-hidden="true"><path d={d} /></svg>
        </button>
      ))}
    </div>
    <button className="w-[75px] pb-px pl-1 leading-[18px] font-bold">Model</button>
    <button className="w-[90px] border-x border-[#8a8a8a] bg-[#d4d4d4] pb-px leading-[18px]">3D Views</button>
    <button className="w-[144px] border-r border-[#8a8a8a] bg-[#d4d4d4] pr-3 pb-px leading-[18px]">Motion Study 1</button>
  </div>
);

const S = "#2d7ca3";

// Each entry is one selection filter, drawn above the small purple funnel.
const filters: ReactNode[] = [
  <circle cx="5" cy="6" r="2.500" fill="#4a9cc4" stroke="#123f57" />,
  <path d="M5 1v18" stroke={S} strokeWidth="2" />,
  <path d="M1.500 2.500h14v12h-14z" fill="url(#steel)" stroke="#123f57" />,
  <path d="m1 9 8-7c2 3 5 0 8 1l2 5-8 7c-3-3-5 1-7 0z" fill="url(#steel)" stroke="#123f57" />,
  <><path d="m2 6 6-4 9 2v10l-7 4-8-3z" fill="url(#steel)" stroke="#123f57" /><path d="m2 6 8 2 7-4m-7 4v10" stroke="#123f57" /></>,
  <path d="M2 17 17 2" stroke={S} strokeWidth="1.800" strokeDasharray="6 2 2 2" />,
  <><path d="m2 6 11-4v12L2 18z" fill="url(#steel)" stroke="#2d7ca3" /><path d="M7.500 1v18" strokeDasharray="3 2" /></>,
  <path d="M3.500 4.500h5v5h-5z" fill="#4a9cc4" stroke="#123f57" />,
  <><path d="M6 1v17m5-17v17m4-17v17M1 6h17M1 11h17" stroke="#ddd" /><path d="M15 2H5L2 5v8l3 4h8" stroke={S} strokeWidth="1.800" /></>,
  <><path d="M4 16V4h13" strokeWidth="1.800" /><path d="M2.500 14.500h3v4h-3zM15.500 2.500h3v3h-3z" fill="#fff" /></>,
  <><path d="M2 16 16 2" stroke={S} strokeWidth="2" /><path d="M7.500 7.500h4v4h-4z" fill="#fff" /></>,
  <><path d="M9 0v4m0 10v4M0 9h4m10 0h4" stroke={S} strokeWidth="2" /><circle cx="9" cy="9" r="5" strokeWidth="1.500" /><circle cx="9" cy="9" r="1.500" fill="#333" /></>,
  <><path d="M2.500 2.500h5v15h-5zM7.500 4.500h10v8h-10z" fill="#eee" /><path d="M1 9h17" stroke={S} strokeDasharray="2 1" /></>,
  <><path d="m2 9 5-5 6 2 1 4-5 5z" strokeWidth="1.500" stroke={S} /><path d="m1 9 8-7m0 3 4 4M4 7l3-3" strokeWidth="2" /></>,
  <path d="m1 9 3-1 3 8 5-14h7" strokeWidth="1.700" />,
  <><path d="M.5 2.500h19v8H.5zM10 2.500v8" /><path d="M3 7.500a2 2 0 0 1 4 0zM12 5h2v3.500h-2zM17 5v4" /></>,
  <><path d="m1 18 6-6" strokeWidth="2.500" /><circle cx="11" cy="7.500" r="6" fill="#f4f4f4" /><path d="M9 11V5l4 5V4" /></>,
  <><path d="M2.500 1.500h13v11h-13zM9 12.500v3M5 17h8" strokeWidth="1.300" /><path d="m6 11 3-8 3 8M7 8.500h4" strokeWidth="1.800" stroke="#111" /></>,
  <path d="m1 13 5-8 12-1-3 3v4l-5-6v5L5 6" strokeWidth="1.500" />,
  <><path d="M2 1v6h7L6 4H2" stroke={S} strokeWidth="1.500" /><path d="M2 10c2 3 2 5 0 8m4-8c2 3 2 5 0 8m4-8c2 3 2 5 0 8" /></>,
  <><path d="m1 18 4-5" strokeWidth="2.500" /><circle cx="10" cy="8" r="6.500" fill="#f4f4f4" /><path d="M3 8h14M7 13l3-6 3 6" strokeWidth="1.300" /></>,
  <><path d="M2 2h14v11l-5 5H7l-5-5z" strokeDasharray="2 1.500" /><path d="M5.500 2.500h7v12l-3 3-4-3z" fill="url(#plate)" /></>,
  <><path d="M1.500 2.500h15v13h-15z" /><path d="m4 14 3-9 4 9m-6-3h5" strokeWidth="1.500" /><circle cx="13" cy="6" r="1.500" /></>,
  <><circle cx="8.500" cy="9" r="7.500" fill="#f4f4f4" /><path d="M8.500 9V1.500A7.500 7.500 0 0 1 16 9zM8.500 9v7.500A7.500 7.500 0 0 1 1 9z" fill="#222" /></>,
  <><path d="M1 6h10" strokeWidth="1.500" /><path d="M11.500 2.500h7v7h-7z" fill="url(#steel)" stroke="#123f57" /></>,
  <><path d="M1 6h17" strokeWidth="1.800" /><path d="M6.500 2.500h7v7h-7z" fill="url(#steel)" stroke="#123f57" /></>,
];

const FilterBar = () => (
  <div className="flex h-[34px] border-b border-[#7f7f7f] bg-[#f7f7f7]">
    <div className="flex items-center border-r border-[#7f7f7f] pt-[2px] pr-[10px] pl-[3px]">
      <div className="h-[26px] border-l-2 border-dotted border-[#999]" />
      <button aria-label="Toggle filters" className="ml-3"><Svg><path d="M4 5.500h12L12 10v7H8v-7z" fill="#ddd" stroke="#bbb" /></Svg></button>
      <button aria-label="Clear filters" className="ml-[7px]"><Svg>{funnels("#eee", "#bbb")}</Svg></button>
      <button aria-label="All filters" className="ml-[7px]"><Svg>{funnels("#d58be8", "#5b1a7a")}</Svg></button>
      <button aria-label="Select" className="ml-[3px] flex h-[26px] w-8 items-center justify-center border border-[#3f87b3] bg-[#b0b0b0] pr-1"><Svg>{cursor}</Svg></button>
      <button aria-label="Select options" className="flex h-[26px] w-[14px] items-center justify-center border border-l-0 border-[#8a8a8a]"><Arrow /></button>
      <button aria-label="Select over geometry" className="mr-[6px] ml-[3px]">
        <Svg><g stroke="#bbb"><path d="M8 2v12l11-1z" fill="#ccc" /><path d="M2 2v14l3-3 3 5 2-1-3-5h4z" fill="#eee" /></g></Svg>
      </button>
      <div className="mr-[10px] h-[22px] w-px bg-[#8a8a8a]" />
      <div className="flex gap-[7px]">
        {filters.map((art, i) => (
          <button key={i} aria-label={`Filter ${i + 1}`}>
            <Svg>{art}<path d="M12 13h7v2h-2v4h-3v-4h-2z" fill="#9a5fb5" stroke="#f7f7f7" strokeWidth=".6" /></Svg>
          </button>
        ))}
      </div>
    </div>
  </div>
);

const StatusBar = () => (
  <footer className="flex h-[21px] items-center bg-[#f7f7f7] pt-[2px] pl-px leading-[19px]">
    <span className="flex-1">SOLIDWORKS Premium 2016 x64 Edition</span>
    <div className="h-[19px] w-[9px] border-x border-[#d0d0d0]" />
    <span className="w-[87px] text-center whitespace-nowrap">Editing Part</span>
    <div className="h-[19px] w-[17px] border-x border-[#d0d0d0]" />
    <button className="ml-[39px] flex items-center gap-[26px]">MMGS<Arrow className="rotate-180 fill-[#333]" /></button>
    <svg viewBox="0 0 20 18" className="mr-[2px] ml-[65px] h-4 w-[18px]" fill="#e5e5e5" stroke="#444" aria-hidden="true">
      <path d="m1 5 9-4 9 9-1 6-4 1L2 10zM1 5l12 7 6-2M13 12l1 5" /><circle cx="9" cy="5" r="2" />
    </svg>
  </footer>
);

const SwCube = ({ year = false }: { year?: boolean }) => (
  <>
    <path d="m2 6 13-5 13 4v20l-12 5-14-5z" fill="#a80f16" />
    <path d="m2 6 13-5 13 4-12 5z" fill="#e8434a" />
    <path d="m2 6 14 4v20L2 25z" fill="#c9161e" />
    <text x="15" y="17" textAnchor="middle" fontSize="13" fontWeight="700" fill="#fff">SW</text>
    {year && <text x="19" y="28" textAnchor="middle" fontSize="7" fontWeight="700" fill="#fff">2016</text>}
  </>
);

const apps: { name: string; state?: string; art: ReactNode }[] = [
  { name: "Task view", art: <g fill="none" stroke="#fff" strokeWidth="1.300"><path d="M4 5v3h13V5M4 24v-3h13v3M4 11h13v7H4zM22 5v4m0 5v10" /><path d="M21 10.500h2v2h-2z" fill="#fff" /></g> },
  { name: "File Explorer", state: "open", art: <><path d="M1 4h10l3 3h14v18H1z" fill="#e5a11a" /><path d="M1 8h28v17H1z" fill="#ffd364" /><path d="M6 26V18q0-2 2-2h14q2 0 2 2v8h-4v-5H10v5z" fill="#3f97dc" /></> },
  { name: "Store", art: <><path d="M8 9V3q0-2 2-2h10q2 0 2 2v6h-3V4h-8v5z" fill="#ddd" /><path d="M0 8h30v22H0z" fill="#f3f3f3" /><path d="M9 13h5v5H9z" fill="#f25022" /><path d="M16 13h5v5h-5z" fill="#7fba00" /><path d="M9 20h5v5H9z" fill="#00a4ef" /><path d="M16 20h5v5h-5z" fill="#ffb900" /></> },
  { name: "Mail", art: <><path d="m0 11 15-9 15 9v8H0z" fill="#0f5fb5" /><path d="M3 11h24v8l-12 5-12-5z" fill="#f5f5f5" /><path d="m0 11 15 10 15-10v18H0z" fill="#2fa5ec" /><path d="m30 11-15 10 15 8z" fill="#42c7f5" /></> },
  { name: "Chrome", state: "open", art: <><circle cx="15" cy="15" r="14" fill="#fbc93b" /><path d="M15 15 2.900 8A14 14 0 0 1 27.500 9H15z" fill="#db4437" /><path d="M2.900 8 9 18l6 3-3.500 7.600A14 14 0 0 1 2.900 8z" fill="#2a9e58" /><circle cx="15" cy="15" r="6.500" fill="#f5f5f5" /><circle cx="15" cy="15" r="5" fill="#4285f4" /></> },
  { name: "Window", art: <><path d="M1 4h27v22H1z" fill="#f0f0f0" stroke="#aaa" /><path d="M4 8h11v15H4z" fill="#4f9590" /><path d="M4 8h11v7H4z" fill="#4b7ea3" /><path d="M17 8h5v15h-5z" fill="#ddd" /><path d="M24 8h2v9h-2z" fill="#589a9a" /></> },
  { name: "X tool", art: <><circle cx="15" cy="15" r="14" fill="#1414c8" stroke="#5b6bd8" /><path d="m8 8 14 14m0-14L8 22" stroke="#ffee1a" strokeWidth="5" /></> },
  { name: "Remote desktop", art: <><path d="m9 3 17 5-1 14L9 17z" fill="#46a9ef" stroke="#b9dff8" /><path d="m18 20 7 2-6 3z" fill="#aaa" /><path d="m2 22 6-3 13 5-6 4z" fill="#dcdcdc" /></> },
  { name: "SOLIDWORKS", state: "active", art: <SwCube year /> },
  { name: "Photos", state: "open", art: <><path d="M1 1h28v28H1z" fill="#2aa5ee" /><circle cx="20" cy="8" r="3" fill="#fff" /><path d="m14 29 8-14 7 7v7z" fill="#5479d8" /><path d="M1 19 9 11l14 18H1z" fill="#1a4b9c" /></> },
];

const Taskbar = () => (
  <div className="flex h-[50px] bg-linear-to-r from-[#22323c] via-[#2b2b2b] via-75% to-[#1a2e3a] text-white">
    <button aria-label="Start" className="flex w-[60px] items-center justify-center">
      <svg viewBox="0 0 20 20" className="h-5 w-5" fill="#fff" aria-hidden="true"><path d="m0 3 8.500-1.200v7.700H0zM9.500 1.600 20 0v9.500H9.500zM0 10.500h8.500v7.700L0 17zM9.500 10.500H20V20L9.500 18.400z" /></svg>
    </button>
    <label className="flex w-[430px] items-center border border-[#bdbdbd] bg-[#f2f2f2] pl-[14px] text-[#222]">
      <svg viewBox="0 0 22 22" className="h-[21px] w-[21px]" fill="none" stroke="#222" strokeWidth="1.600" aria-hidden="true"><circle cx="14" cy="8" r="6.500" /><path d="m9.500 12.500-9 9" /></svg>
      <input aria-label="Aramak için buraya yazın" placeholder="Aramak için buraya yazın" className="ml-[14px] w-0 flex-1 bg-transparent text-[18px] leading-6 placeholder:text-[#3a3a3a]" />
    </label>
    {apps.map(({ name, state, art }) => (
      <button
        key={name}
        aria-label={name}
        className={`flex w-[62px] shrink-0 flex-col items-center pt-[10px] ${state === "active" ? "bg-[#56605f]" : ""}`}
      >
        <svg viewBox="0 0 30 30" className="h-[30px] w-[30px]" aria-hidden="true">{art}</svg>
        {state && <span className={`mt-auto h-[3px] bg-[#76b9ed] ${state === "active" ? "w-full" : "w-[51px]"}`} />}
      </button>
    ))}
    <div className="mr-[5px] ml-auto flex items-center">
      <svg viewBox="0 0 18 10" className="h-2.5 w-[18px]" fill="none" stroke="#fff" strokeWidth="1.500" aria-hidden="true"><path d="m2 9 7-7 7 7" /></svg>
      <svg viewBox="0 0 32 30" className="ml-2 h-5 w-[22px]" aria-hidden="true"><SwCube /><path d="M29 10v11m0 3v4" stroke="#ffe600" strokeWidth="4" /></svg>
      <svg viewBox="0 0 18 18" className="ml-[14px] h-[18px] w-[18px]" fill="none" stroke="#fff" strokeWidth="1.300" aria-hidden="true"><path d="M2 17A15 15 0 0 1 17 2M6 17A11 11 0 0 1 17 6M10 17a7 7 0 0 1 7-7" /><circle cx="15" cy="15" r="1.500" fill="#fff" /></svg>
      <svg viewBox="0 0 20 18" className="ml-[9px] h-[18px] w-5" fill="none" stroke="#fff" strokeWidth="1.400" aria-hidden="true"><path d="M1 3h16v11H1zM18 6v5" /><path d="M3 5h4v7H3z" fill="#fff" /><circle cx="14" cy="12" r="5" fill="#12a02c" stroke="none" /><path d="M14 9c3 3 2 5 0 5s-3-2 0-5z" fill="#fff" stroke="none" /></svg>
      <svg viewBox="0 0 22 18" className="ml-2 h-[18px] w-[22px]" fill="none" stroke="#fff" strokeWidth="1.300" aria-hidden="true"><path d="M1 6h3l5-4v14l-5-4H1zM12 6q2 3 0 6m3-9q4 6 0 12m3-14q5 8 0 16" /></svg>
      <div className="ml-2 flex w-[76px] flex-col items-center text-[14px] leading-[23px]"><span>01:01</span><span>8.11.2020</span></div>
      <svg viewBox="0 0 22 22" className="ml-[20px] h-[22px] w-[22px]" fill="none" stroke="#fff" strokeWidth="1.400" aria-hidden="true"><path d="M1 2h20v15h-7l-3 3-3-3H1z" /></svg>
      <div className="ml-[24px] h-[50px] w-px bg-[#66737a]" />
    </div>
  </div>
);

const App = () => {
  return (
    <div className="flex min-h-screen flex-col overflow-hidden bg-[#f7f7f7] font-['Open_Sans','Noto_Sans',sans-serif] text-[14px] text-[#111]">
      <TitleBar />
      <Ribbon />
      <TabRow />
      <div className="flex flex-1">
        <FeaturePanel />
        <Viewport />
      </div>
      <SheetTabs />
      <FilterBar />
      <StatusBar />
      <Taskbar />
    </div>
  );
};

export default App;
